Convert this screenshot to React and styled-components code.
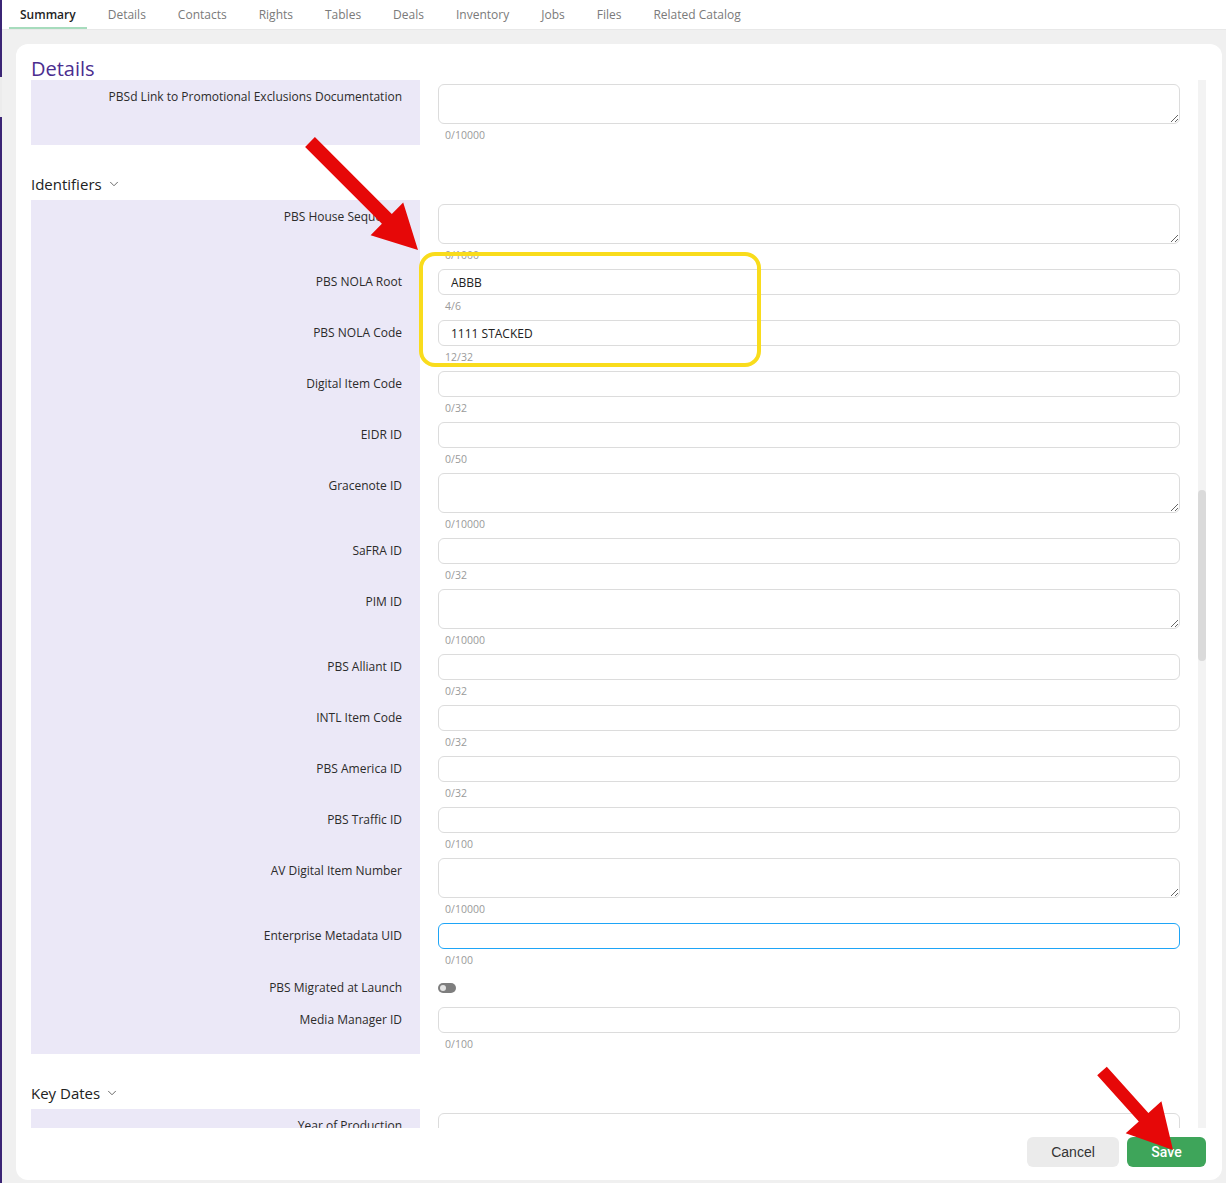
import React from 'react';
import styled, { createGlobalStyle } from 'styled-components';
import { ChevronDown } from 'lucide-react';

const GlobalStyle = createGlobalStyle`
    html, body {
        margin: 0;
        padding: 0;
        background: #f0f0f0;
        font-family: "Open Sans", "Noto Sans", sans-serif;
    }
    * {
        box-sizing: border-box;
    }
`;

const tabs = ['Summary', 'Details', 'Contacts', 'Rights', 'Tables', 'Deals', 'Inventory', 'Jobs', 'Files', 'Related Catalog'];

const sections = [
    {
        title: null,
        rows: [{ label: 'PBSd Link to Promotional Exclusions Documentation', kind: 'area', max: 10000 }],
    },
    {
        title: 'Identifiers',
        rows: [
            { label: 'PBS House Sequence', kind: 'area', max: 1000 },
            { label: 'PBS NOLA Root', kind: 'input', max: 6, value: 'ABBB' },
            { label: 'PBS NOLA Code', kind: 'input', max: 32, value: '1111 STACKED' },
            { label: 'Digital Item Code', kind: 'input', max: 32 },
            { label: 'EIDR ID', kind: 'input', max: 50 },
            { label: 'Gracenote ID', kind: 'area', max: 10000 },
            { label: 'SaFRA ID', kind: 'input', max: 32 },
            { label: 'PIM ID', kind: 'area', max: 10000 },
            { label: 'PBS Alliant ID', kind: 'input', max: 32 },
            { label: 'INTL Item Code', kind: 'input', max: 32 },
            { label: 'PBS America ID', kind: 'input', max: 32 },
            { label: 'PBS Traffic ID', kind: 'input', max: 100 },
            { label: 'AV Digital Item Number', kind: 'area', max: 10000 },
            { label: 'Enterprise Metadata UID', kind: 'input', max: 100, focused: true },
            { label: 'PBS Migrated at Launch', kind: 'toggle' },
            { label: 'Media Manager ID', kind: 'input', max: 100 },
        ],
    },
    {
        title: 'Key Dates',
        rows: [{ label: 'Year of Production', kind: 'input', max: 4 }],
    },
];

// polygon for an annotation arrow from tail to tip
const arrowPoints = (tail, tip, shaft, headLen, headHalf) => {
    const dx = tip[0] - tail[0];
    const dy = tip[1] - tail[1];
    const len = Math.hypot(dx, dy);
    const ux = dx / len;
    const uy = dy / len;
    const px = uy;
    const py = -ux;
    const bx = tip[0] - ux * headLen;
    const by = tip[1] - uy * headLen;
    const pts = [
        [tail[0] + px * shaft, tail[1] + py * shaft],
        [bx + px * shaft, by + py * shaft],
        [bx + px * headHalf, by + py * headHalf],
        tip,
        [bx - px * headHalf, by - py * headHalf],
        [bx - px * shaft, by - py * shaft],
        [tail[0] - px * shaft, tail[1] - py * shaft],
    ];
    return pts.map((p) => p.map((v) => v.toFixed(1)).join(',')).join(' ');
};

function Row({ row }) {
    if (row.kind === 'toggle') {
        return (
            <RowGrid>
                <Label $top={6}>{row.label}</Label>
                <ToggleCell>
                    <Toggle />
                </ToggleCell>
            </RowGrid>
        );
    }
    const value = row.value || '';
    return (
        <RowGrid>
            <Label $top={5}>{row.label}</Label>
            <Field>
                {row.kind === 'area' ? (
                    <TextArea defaultValue={value} />
                ) : (
                    <Input defaultValue={value} $focused={row.focused} />
                )}
                <Counter>
                    {value.length}/{row.max}
                </Counter>
            </Field>
        </RowGrid>
    );
}

export default function App() {
    return (
        <>
            <GlobalStyle />
            <Page>
                <SideStrip>
                    <StripPart $h={77} />
                    <StripGap />
                    <StripPart $grow />
                </SideStrip>
                <Main>
                    <TabBar>
                        {tabs.map((tab, index) => (
                            <Tab key={tab} $active={index === 0}>
                                {tab}
                            </Tab>
                        ))}
                    </TabBar>
                    <Body>
                        <Card>
                            <Title>Details</Title>
                            <ScrollArea>
                                <Content>
                                    {sections.map((section, i) => (
                                        <div key={i}>
                                            {section.title && (
                                                <SectionHeader>
                                                    {section.title}
                                                    <ChevronDown size={14} strokeWidth={1.5} color="#555" />
                                                </SectionHeader>
                                            )}
                                            <SectionBody>
                                                {section.rows.map((row) => (
                                                    <Row key={row.label} row={row} />
                                                ))}
                                            </SectionBody>
                                        </div>
                                    ))}
                                </Content>
                                <Track>
                                    <Thumb $offset={410} $size={171} />
                                </Track>
                            </ScrollArea>
                            <Footer>
                                <Button type="button">Cancel</Button>
                                <Button type="button" $primary>
                                    Save
                                </Button>
                            </Footer>
                        </Card>
                    </Body>
                </Main>
                <Overlay viewBox="0 0 1226 1183" width="1226" height="1183">
                    <rect x="421" y="254" width="338" height="111" rx="14" fill="none" stroke="#f9dc1c" strokeWidth="4" />
                    <polygon points={arrowPoints([310, 142], [418, 250], 7, 44, 23)} fill="#e60808" />
                    <polygon points={arrowPoints([1102, 1071], [1173, 1150], 6.5, 44, 24)} fill="#e60808" />
                </Overlay>
            </Page>
        </>
    );
}

const Page = styled.div`
    position: relative;
    display: flex;
    width: 1226px;
    height: 1183px;
    overflow: hidden;
    background: #f0f0f0;
`;

const SideStrip = styled.div`
    display: flex;
    flex-direction: column;
    width: 2px;
`;

const StripPart = styled.div`
    height: ${(p) => (p.$h ? `${p.$h}px` : 'auto')};
    flex: ${(p) => (p.$grow ? 1 : 'none')};
    background: #3b2575;
`;

const StripGap = styled.div`
    height: 40px;
    background: #ececec;
`;

const Main = styled.div`
    flex: 1;
    display: flex;
    flex-direction: column;
`;

const TabBar = styled.div`
    display: flex;
    gap: 10px;
    height: 30px;
    padding-left: 7px;
    background: #fff;
    border-bottom: 1px solid #e8e8e8;
`;

const Tab = styled.div`
    height: 29px;
    padding: 7px 11px 0;
    font-size: 12px;
    line-height: 16px;
    color: ${(p) => (p.$active ? '#1f1f1f' : '#7a7a7a')};
    font-weight: ${(p) => (p.$active ? 600 : 400)};
    border-bottom: 2px solid ${(p) => (p.$active ? '#a7dcbd' : 'transparent')};
`;

const Body = styled.div`
    flex: 1;
    padding: 14px 4px 3px 14px;
`;

const Card = styled.div`
    display: flex;
    flex-direction: column;
    height: 1136px;
    padding: 13px 16px 0 15px;
    background: #fff;
    border-radius: 12px;
`;

const Title = styled.h1`
    margin: 0;
    font-size: 20px;
    line-height: 23px;
    font-weight: 500;
    color: #4b2d8f;
`;

const ScrollArea = styled.div`
    display: flex;
    height: 1048px;
`;

const Content = styled.div`
    flex: 1;
    overflow: hidden;
    padding-right: 18px;
`;

const Track = styled.div`
    width: 8px;
    background: #f3f3f3;
`;

const Thumb = styled.div`
    margin-top: ${(p) => p.$offset}px;
    height: ${(p) => p.$size}px;
    border-radius: 4px;
    background: #dadada;
`;

const SectionHeader = styled.div`
    display: flex;
    align-items: center;
    gap: 5px;
    margin: 29px 0 6px;
    font-size: 15px;
    line-height: 20px;
    font-weight: 500;
    color: #222;
`;

const SectionBody = styled.div`
    padding-top: 4px;
    background: linear-gradient(to right, #ebe8f7 0, #ebe8f7 389px, transparent 389px);
`;

const RowGrid = styled.div`
    display: grid;
    grid-template-columns: 389px 742px;
    column-gap: 18px;
`;

const Label = styled.div`
    padding: ${(p) => p.$top}px 18px 0 0;
    text-align: right;
    font-size: 12px;
    line-height: 16px;
    font-weight: 500;
    color: #2b2b2b;
`;

const Field = styled.div`
    display: flex;
    flex-direction: column;
    ${RowGrid}:last-child & > div:last-child {
        margin-bottom: 3px;
    }
`;

const Input = styled.input`
    width: 100%;
    height: 26px;
    padding: 0 12px;
    border: 1px solid ${(p) => (p.$focused ? '#1ea5f7' : '#dcdcdc')};
    border-radius: 6px;
    font-family: inherit;
    font-size: 12px;
    color: #222;
    outline: none;
    background: #fff;
`;

const TextArea = styled.textarea`
    display: block;
    width: 100%;
    height: 40px;
    padding: 6px 12px;
    border: 1px solid #dcdcdc;
    border-radius: 6px;
    font-family: inherit;
    font-size: 12px;
    resize: vertical;
    outline: none;
    background: #fff;
`;

const Counter = styled.div`
    margin: 4px 0 7px 7px;
    font-size: 10.5px;
    line-height: 14px;
    color: #9a9a9a;
`;

const ToggleCell = styled.div`
    padding: 9px 0 14px;
`;

const Toggle = styled.div`
    display: flex;
    align-items: center;
    width: 18px;
    height: 10px;
    padding: 0 2px;
    border-radius: 5px;
    background: #7e7e7e;
    &::after {
        content: '';
        width: 6px;
        height: 6px;
        border-radius: 50%;
        background: #e4e4e4;
    }
`;

const Footer = styled.div`
    display: flex;
    justify-content: flex-end;
    gap: 8px;
    padding: 9px 0 13px;
`;

const Button = styled.button`
    height: 30px;
    width: ${(p) => (p.$primary ? '79px' : '92px')};
    border: none;
    border-radius: 6px;
    font-family: ${(p) => (p.$primary ? 'Roboto, sans-serif' : '"Liberation Sans", Arial, sans-serif')};
    font-size: 14px;
    font-weight: ${(p) => (p.$primary ? 500 : 400)};
    color: ${(p) => (p.$primary ? '#fff' : '#333')};
    background: ${(p) => (p.$primary ? '#3ea55a' : '#ebebeb')};
`;

const Overlay = styled.svg`
    position: absolute;
    top: 0;
    left: 0;
    pointer-events: none;
`;
